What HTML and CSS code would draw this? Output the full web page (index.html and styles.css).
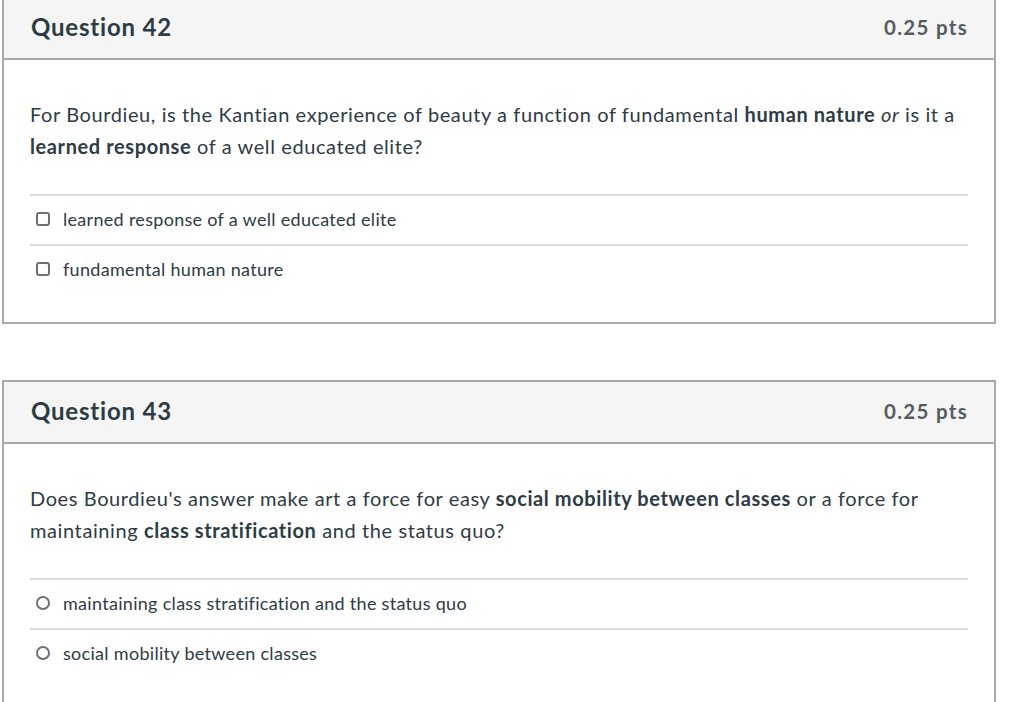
FILE: index.html
```html
<!DOCTYPE html>
<html>
<head>
<meta charset="utf-8">
<link rel="stylesheet" href="styles.css">
</head>
<body>
<div class="quiz">
  <section class="question q-first">
    <header class="q-header">
      <span class="q-name">Question 42</span>
      <span class="q-pts">0.25 pts</span>
    </header>
    <div class="q-body">
      <p class="q-text">For Bourdieu, is the Kantian experience of beauty a function of fundamental <strong>human nature</strong> <em>or</em> is it a <strong>learned response</strong> of a well educated elite?</p>
      <div class="answers">
        <div class="answer"><span class="checkbox"></span><span>learned response of a well educated elite</span></div>
        <div class="answer"><span class="checkbox"></span><span>fundamental human nature</span></div>
      </div>
    </div>
  </section>
  <section class="question">
    <header class="q-header">
      <span class="q-name">Question 43</span>
      <span class="q-pts">0.25 pts</span>
    </header>
    <div class="q-body">
      <p class="q-text">Does Bourdieu's answer make art a force for easy <strong>social mobility between classes</strong> or a force for maintaining <strong>class stratification</strong> and the status quo?</p>
      <div class="answers">
        <div class="answer"><span class="radio"></span><span>maintaining class stratification and the status quo</span></div>
        <div class="answer"><span class="radio"></span><span>social mobility between classes</span></div>
      </div>
    </div>
  </section>
</div>
</body>
</html>
```
FILE: styles.css
```css
html, body {
  margin: 0;
  padding: 0;
  background: #ffffff;
  overflow: hidden;
}
body {
  font-family: Lato, "Open Sans", "Liberation Sans", sans-serif;
  color: #2d3b45;
}
.quiz {
  display: flex;
  flex-direction: column;
  gap: 56px;
  padding-left: 2px;
  width: 994px;
}
.question {
  border: 2px solid #a9a9a9;
}
.q-first {
  margin-top: -4px;
}
.q-header {
  display: flex;
  justify-content: space-between;
  align-items: center;
  height: 60px;
  padding: 0 27px 0 27px;
  background: #f5f5f5;
  border-bottom: 2px solid #a9a9a9;
}
.q-name {
  font-size: 24px;
  font-weight: 700;
  letter-spacing: 0.8px;
  color: #2d3b45;
  margin-top: -3px;
}
.q-pts {
  font-size: 20.5px;
  font-weight: 700;
  letter-spacing: 1.3px;
  color: #555c61;
  margin-top: -2px;
  margin-right: -1px;
}
.q-body {
  padding: 38px 26px 28px 26px;
}
.q-text {
  margin: 0 0 32px 0;
  font-size: 20px;
  letter-spacing: 0.6px;
  line-height: 32px;
}
.q-text strong {
  font-weight: 700;
}
.answers {
  display: flex;
  flex-direction: column;
}
.answer {
  display: flex;
  align-items: center;
  gap: 13px;
  height: 46px;
  padding: 0 0 2px 6px;
  border-top: 2px solid #dcdcdc;
  font-size: 18px;
  letter-spacing: 0.3px;
}
.checkbox {
  width: 10px;
  height: 10px;
  border: 2px solid #6f6f6f;
  border-radius: 3px;
  flex: none;
}
.radio {
  width: 10px;
  height: 10px;
  border: 2px solid #6f6f6f;
  border-radius: 50%;
  flex: none;
}
```
